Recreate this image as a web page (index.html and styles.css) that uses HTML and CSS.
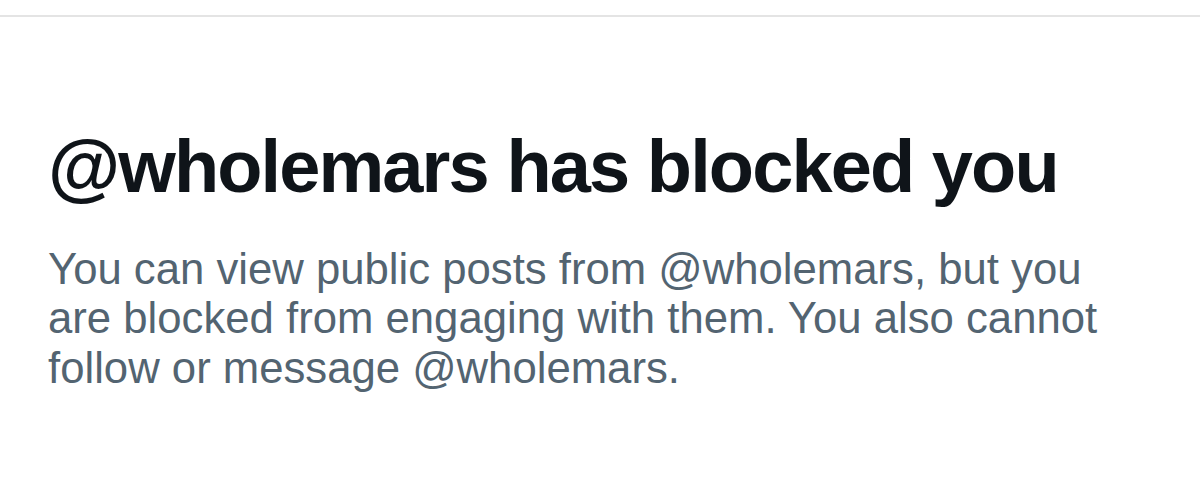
FILE: index.html
```html
<!DOCTYPE html>
<html lang="en">
<head>
  <meta charset="UTF-8" />
  <meta name="viewport" content="width=device-width, initial-scale=1" />
  <title>@wholemars has blocked you</title>
  <link rel="stylesheet" href="styles.css">
</head>
<body>
  <div class="top-bar"></div>
  <main class="blocked">
    <h1 class="blocked-title">@wholemars has blocked you</h1>
    <p class="blocked-text">You can view public posts from @wholemars, but you are blocked from engaging with them. You also cannot follow or message @wholemars.</p>
  </main>
</body>
</html>
```

FILE: styles.css
```css
body {
  margin: 0;
  background-color: #ffffff;
  font-family: "Liberation Sans", Arial, sans-serif;
}
.top-bar {
  height: 15px;
  border-bottom: 2px solid #e4e4e4;
}
.blocked {
  padding: 0 48px;
}
.blocked-title {
  margin: 106px 0 0;
  font-size: 74px;
  line-height: 1.2;
  font-weight: bold;
  letter-spacing: -1.9px;
  color: #0f1419;
}
.blocked-text {
  margin: 32px 0 0;
  max-width: 1070px;
  font-size: 43.7px;
  line-height: 49.5px;
  color: #536471;
}
```
